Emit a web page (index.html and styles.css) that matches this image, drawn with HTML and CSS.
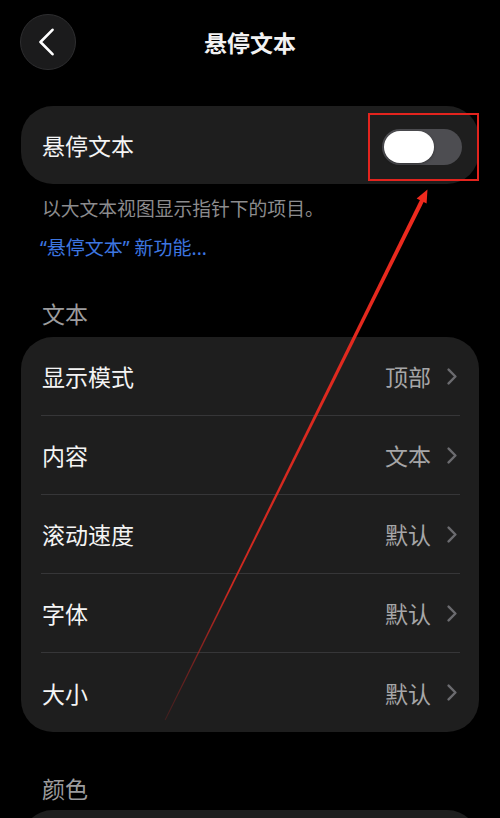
FILE: index.html
```html
<!DOCTYPE html>
<html lang="zh-CN">
<head>
<meta charset="utf-8">
<title>悬停文本</title>
<link rel="stylesheet" href="styles.css">
</head>
<body>
<div class="screen">
  <header class="nav">
    <button class="back" aria-label="返回">
      <svg width="17" height="28" viewBox="0 0 17 28"><path d="M14.5 1.8 L2.5 14 L14.5 26.2" fill="none" stroke="#fff" stroke-width="2.6" stroke-linecap="round" stroke-linejoin="round"/></svg>
    </button>
    <h1 class="title">悬停文本</h1>
    <span class="spacer"></span>
  </header>

  <section class="card toggle-card">
    <span class="label">悬停文本</span>
    <span class="switch"><span class="thumb"></span></span>
    <span class="highlight"></span>
  </section>
  <p class="footnote">以大文本视图显示指针下的项目。</p>
  <a class="link">“悬停文本” 新功能...</a>

  <h2 class="section">文本</h2>
  <section class="card list">
    <div class="row"><span class="label">显示模式</span><span class="value">顶部</span><svg class="chev" width="10" height="17" viewBox="0 0 10 17"><path d="M1.6 1.6 L8.4 8.5 L1.6 15.4" fill="none" stroke="#6b6b6f" stroke-width="2.4" stroke-linecap="round" stroke-linejoin="round"/></svg></div>
    <div class="row"><span class="label">内容</span><span class="value">文本</span><svg class="chev" width="10" height="17" viewBox="0 0 10 17"><path d="M1.6 1.6 L8.4 8.5 L1.6 15.4" fill="none" stroke="#6b6b6f" stroke-width="2.4" stroke-linecap="round" stroke-linejoin="round"/></svg></div>
    <div class="row"><span class="label">滚动速度</span><span class="value">默认</span><svg class="chev" width="10" height="17" viewBox="0 0 10 17"><path d="M1.6 1.6 L8.4 8.5 L1.6 15.4" fill="none" stroke="#6b6b6f" stroke-width="2.4" stroke-linecap="round" stroke-linejoin="round"/></svg></div>
    <div class="row"><span class="label">字体</span><span class="value">默认</span><svg class="chev" width="10" height="17" viewBox="0 0 10 17"><path d="M1.6 1.6 L8.4 8.5 L1.6 15.4" fill="none" stroke="#6b6b6f" stroke-width="2.4" stroke-linecap="round" stroke-linejoin="round"/></svg></div>
    <div class="row"><span class="label">大小</span><span class="value">默认</span><svg class="chev" width="10" height="17" viewBox="0 0 10 17"><path d="M1.6 1.6 L8.4 8.5 L1.6 15.4" fill="none" stroke="#6b6b6f" stroke-width="2.4" stroke-linecap="round" stroke-linejoin="round"/></svg></div>
  </section>

  <h2 class="section section-color">颜色</h2>
  <section class="card list stub"></section>

  <svg class="arrow" width="500" height="818" viewBox="0 0 500 818">
    <defs>
      <linearGradient id="fade" gradientUnits="userSpaceOnUse" x1="425" y1="195" x2="165" y2="720">
        <stop offset="0" stop-color="#f02a1e" stop-opacity="1"/>
        <stop offset="0.75" stop-color="#e02a20" stop-opacity="0.9"/>
        <stop offset="1" stop-color="#b02020" stop-opacity="0.25"/>
      </linearGradient>
    </defs>
    <polygon points="424.4,200.5 420.6,198.7 164.7,719.8 165.5,720.2" fill="url(#fade)"/>
    <polygon points="427.5,189.5 426.6,203.5 416.6,198.6" fill="#f02a1e"/>
  </svg>
</div>
</body>
</html>
```

FILE: styles.css
```css
* { box-sizing: border-box; }

html, body {
  margin: 0;
  padding: 0;
  background: #000;
}

body {
  font-family: "Noto Sans CJK SC", "Noto Sans", sans-serif;
  color: #fff;
}

.screen {
  position: relative;
  width: 500px;
  height: 818px;
  overflow: hidden;
  padding-top: 14px;
}

.nav {
  display: grid;
  grid-template-columns: 56px 1fr 56px;
  align-items: center;
  padding: 0 20px;
  height: 56px;
}

.back {
  width: 56px;
  height: 56px;
  border-radius: 50%;
  background: #1b1b1c;
  border: 1px solid #2e2e30;
  display: flex;
  align-items: center;
  justify-content: center;
  padding: 0 3px 0 0;
  margin: 0;
}

.title {
  margin: 0;
  text-align: center;
  font-size: 23px;
  font-weight: 700;
  line-height: 30px;
  color: #f2f2f2;
}

.card {
  background: #1e1e1e;
  margin: 0 21px;
}

.toggle-card {
  position: relative;
  margin-top: 36px;
  height: 78px;
  border-radius: 32px;
  display: flex;
  align-items: center;
  justify-content: space-between;
  padding: 0 17px 0 21px;
}

.label {
  font-size: 23px;
  line-height: 30px;
  color: #f4f4f4;
}

.switch {
  width: 80px;
  height: 36px;
  border-radius: 18px;
  background: #4d4d51;
  display: flex;
  align-items: center;
  padding: 0 2px;
  margin-top: 4px;
}

.thumb {
  width: 50px;
  height: 32px;
  border-radius: 16px;
  background: #fff;
  box-shadow: 0 1px 3px rgba(0,0,0,0.35);
}

.highlight {
  position: absolute;
  left: 347px;
  top: 7px;
  width: 111px;
  height: 68px;
  border: 2px solid #e3241e;
}

.footnote {
  margin: 12px 0 0;
  padding-left: 42px;
  font-size: 18.8px;
  line-height: 24px;
  color: #8c8c8e;
}

.link {
  display: block;
  margin-top: 16px;
  padding-left: 40px;
  font-family: "Noto Sans", "Noto Sans CJK SC", sans-serif;
  font-size: 19px;
  line-height: 24px;
  color: #3d76e0;
}

.section {
  margin: 38px 0 0;
  padding-left: 42px;
  font-size: 23px;
  font-weight: 400;
  line-height: 30px;
  color: #9c9c9e;
}

.list {
  margin-top: 9px;
  border-radius: 32px;
}

.row {
  display: flex;
  align-items: center;
  height: 79px;
  margin: 0 19px 0 20px;
  padding: 0 3px 0 1px;
  border-bottom: 1px solid #363638;
}

.row:last-child {
  border-bottom: none;
}

.row .label {
  flex: 1;
}

.value {
  font-size: 23px;
  line-height: 30px;
  color: #a6a6a8;
  margin-right: 16px;
}

.chev {
  display: block;
}

.section-color {
  margin-top: 41px;
}

.stub {
  margin-top: 7px;
  height: 80px;
}

.arrow {
  position: absolute;
  left: 0;
  top: 0;
  pointer-events: none;
}
```
